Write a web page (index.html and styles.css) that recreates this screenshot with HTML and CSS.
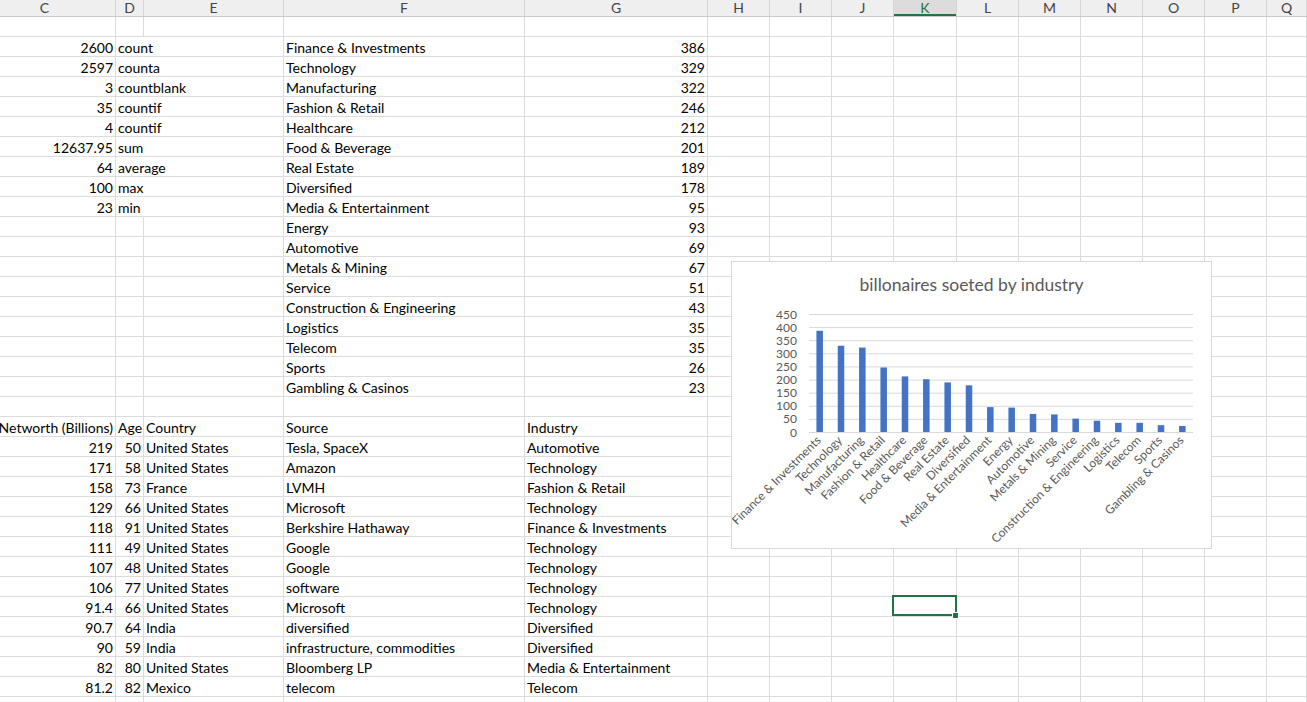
FILE: index.html
```html
<!DOCTYPE html>
<html>
<head>
<meta charset="utf-8">
<link rel="stylesheet" href="styles.css">
</head>
<body>
<div class="sheet">
  <div class="hdr">
    <span class="hc">C</span><span>D</span><span>E</span><span>F</span><span>G</span><span>H</span><span>I</span><span>J</span><span class="hk">K</span><span>L</span><span>M</span><span>N</span><span>O</span><span>P</span><span>Q</span>
  </div>
  <div class="row"><span></span><span></span><span></span><span></span><span></span><span></span><span></span><span></span><span></span><span></span><span></span><span></span><span></span><span></span><span></span></div>
  <div class="row"><span class="n">2600</span><span class="ov">count</span><span></span><span>Finance &amp; Investments</span><span class="n">386</span><span></span><span></span><span></span><span></span><span></span><span></span><span></span><span></span><span></span><span></span></div>
  <div class="row"><span class="n">2597</span><span class="ov">counta</span><span></span><span>Technology</span><span class="n">329</span><span></span><span></span><span></span><span></span><span></span><span></span><span></span><span></span><span></span><span></span></div>
  <div class="row"><span class="n">3</span><span class="ov">countblank</span><span></span><span>Manufacturing</span><span class="n">322</span><span></span><span></span><span></span><span></span><span></span><span></span><span></span><span></span><span></span><span></span></div>
  <div class="row"><span class="n">35</span><span class="ov">countif</span><span></span><span>Fashion &amp; Retail</span><span class="n">246</span><span></span><span></span><span></span><span></span><span></span><span></span><span></span><span></span><span></span><span></span></div>
  <div class="row"><span class="n">4</span><span class="ov">countif</span><span></span><span>Healthcare</span><span class="n">212</span><span></span><span></span><span></span><span></span><span></span><span></span><span></span><span></span><span></span><span></span></div>
  <div class="row"><span class="n">12637.95</span><span class="ov">sum</span><span></span><span>Food &amp; Beverage</span><span class="n">201</span><span></span><span></span><span></span><span></span><span></span><span></span><span></span><span></span><span></span><span></span></div>
  <div class="row"><span class="n">64</span><span class="ov">average</span><span></span><span>Real Estate</span><span class="n">189</span><span></span><span></span><span></span><span></span><span></span><span></span><span></span><span></span><span></span><span></span></div>
  <div class="row"><span class="n">100</span><span class="ov">max</span><span></span><span>Diversified</span><span class="n">178</span><span></span><span></span><span></span><span></span><span></span><span></span><span></span><span></span><span></span><span></span></div>
  <div class="row"><span class="n">23</span><span class="ov">min</span><span></span><span>Media &amp; Entertainment</span><span class="n">95</span><span></span><span></span><span></span><span></span><span></span><span></span><span></span><span></span><span></span><span></span></div>
  <div class="row"><span></span><span></span><span></span><span>Energy</span><span class="n">93</span><span></span><span></span><span></span><span></span><span></span><span></span><span></span><span></span><span></span><span></span></div>
  <div class="row"><span></span><span></span><span></span><span>Automotive</span><span class="n">69</span><span></span><span></span><span></span><span></span><span></span><span></span><span></span><span></span><span></span><span></span></div>
  <div class="row"><span></span><span></span><span></span><span>Metals &amp; Mining</span><span class="n">67</span><span></span><span></span><span></span><span></span><span></span><span></span><span></span><span></span><span></span><span></span></div>
  <div class="row"><span></span><span></span><span></span><span>Service</span><span class="n">51</span><span></span><span></span><span></span><span></span><span></span><span></span><span></span><span></span><span></span><span></span></div>
  <div class="row"><span></span><span></span><span></span><span>Construction &amp; Engineering</span><span class="n">43</span><span></span><span></span><span></span><span></span><span></span><span></span><span></span><span></span><span></span><span></span></div>
  <div class="row"><span></span><span></span><span></span><span>Logistics</span><span class="n">35</span><span></span><span></span><span></span><span></span><span></span><span></span><span></span><span></span><span></span><span></span></div>
  <div class="row"><span></span><span></span><span></span><span>Telecom</span><span class="n">35</span><span></span><span></span><span></span><span></span><span></span><span></span><span></span><span></span><span></span><span></span></div>
  <div class="row"><span></span><span></span><span></span><span>Sports</span><span class="n">26</span><span></span><span></span><span></span><span></span><span></span><span></span><span></span><span></span><span></span><span></span></div>
  <div class="row"><span></span><span></span><span></span><span>Gambling &amp; Casinos</span><span class="n">23</span><span></span><span></span><span></span><span></span><span></span><span></span><span></span><span></span><span></span><span></span></div>
  <div class="row"><span></span><span></span><span></span><span></span><span></span><span></span><span></span><span></span><span></span><span></span><span></span><span></span><span></span><span></span><span></span></div>
  <div class="row"><span class="clip">Networth (Billions)</span><span>Age</span><span>Country</span><span>Source</span><span>Industry</span><span></span><span></span><span></span><span></span><span></span><span></span><span></span><span></span><span></span><span></span></div>
  <div class="row"><span class="n">219</span><span class="n">50</span><span>United States</span><span>Tesla, SpaceX</span><span>Automotive</span><span></span><span></span><span></span><span></span><span></span><span></span><span></span><span></span><span></span><span></span></div>
  <div class="row"><span class="n">171</span><span class="n">58</span><span>United States</span><span>Amazon</span><span>Technology</span><span></span><span></span><span></span><span></span><span></span><span></span><span></span><span></span><span></span><span></span></div>
  <div class="row"><span class="n">158</span><span class="n">73</span><span>France</span><span>LVMH</span><span>Fashion &amp; Retail</span><span></span><span></span><span></span><span></span><span></span><span></span><span></span><span></span><span></span><span></span></div>
  <div class="row"><span class="n">129</span><span class="n">66</span><span>United States</span><span>Microsoft</span><span>Technology</span><span></span><span></span><span></span><span></span><span></span><span></span><span></span><span></span><span></span><span></span></div>
  <div class="row"><span class="n">118</span><span class="n">91</span><span>United States</span><span>Berkshire Hathaway</span><span>Finance &amp; Investments</span><span></span><span></span><span></span><span></span><span></span><span></span><span></span><span></span><span></span><span></span></div>
  <div class="row"><span class="n">111</span><span class="n">49</span><span>United States</span><span>Google</span><span>Technology</span><span></span><span></span><span></span><span></span><span></span><span></span><span></span><span></span><span></span><span></span></div>
  <div class="row"><span class="n">107</span><span class="n">48</span><span>United States</span><span>Google</span><span>Technology</span><span></span><span></span><span></span><span></span><span></span><span></span><span></span><span></span><span></span><span></span></div>
  <div class="row"><span class="n">106</span><span class="n">77</span><span>United States</span><span>software</span><span>Technology</span><span></span><span></span><span></span><span></span><span></span><span></span><span></span><span></span><span></span><span></span></div>
  <div class="row"><span class="n">91.4</span><span class="n">66</span><span>United States</span><span>Microsoft</span><span>Technology</span><span></span><span></span><span></span><span class="sel"></span><span></span><span></span><span></span><span></span><span></span><span></span></div>
  <div class="row"><span class="n">90.7</span><span class="n">64</span><span>India</span><span>diversified</span><span>Diversified</span><span></span><span></span><span></span><span></span><span></span><span></span><span></span><span></span><span></span><span></span></div>
  <div class="row"><span class="n">90</span><span class="n">59</span><span>India</span><span>infrastructure, commodities</span><span>Diversified</span><span></span><span></span><span></span><span></span><span></span><span></span><span></span><span></span><span></span><span></span></div>
  <div class="row"><span class="n">82</span><span class="n">80</span><span>United States</span><span>Bloomberg LP</span><span>Media &amp; Entertainment</span><span></span><span></span><span></span><span></span><span></span><span></span><span></span><span></span><span></span><span></span></div>
  <div class="row"><span class="n">81.2</span><span class="n">82</span><span>Mexico</span><span>telecom</span><span>Telecom</span><span></span><span></span><span></span><span></span><span></span><span></span><span></span><span></span><span></span><span></span></div>
  <div class="row"><span class="n">74.8</span><span class="n">68</span><span>France</span><span>L'Oréal</span><span>Fashion &amp; Retail</span><span></span><span></span><span></span><span></span><span></span><span></span><span></span><span></span><span></span><span></span></div>

  <div class="chart">
    <svg width="479" height="286" viewBox="0 0 479 286">
      <text class="title" x="239.5" y="28.5" text-anchor="middle">billonaires soeted by industry</text>
      <g class="grid">
        <line x1="77" x2="461" y1="52.5" y2="52.5"/>
        <line x1="77" x2="461" y1="65.6" y2="65.6"/>
        <line x1="77" x2="461" y1="78.7" y2="78.7"/>
        <line x1="77" x2="461" y1="91.8" y2="91.8"/>
        <line x1="77" x2="461" y1="104.9" y2="104.9"/>
        <line x1="77" x2="461" y1="118.1" y2="118.1"/>
        <line x1="77" x2="461" y1="131.2" y2="131.2"/>
        <line x1="77" x2="461" y1="144.3" y2="144.3"/>
        <line x1="77" x2="461" y1="157.4" y2="157.4"/>
        <line x1="77" x2="461" y1="170.5" y2="170.5"/>
      </g>
      <g class="ylab">
        <text x="65" y="56.5">450</text>
        <text x="65" y="69.6">400</text>
        <text x="65" y="82.7">350</text>
        <text x="65" y="95.8">300</text>
        <text x="65" y="108.9">250</text>
        <text x="65" y="122.1">200</text>
        <text x="65" y="135.2">150</text>
        <text x="65" y="148.3">100</text>
        <text x="65" y="161.4">50</text>
        <text x="65" y="174.5">0</text>
      </g>
      <g class="bars">
        <rect x="84.42" y="68.78" width="6.5" height="101.22"/>
        <rect x="105.75" y="83.73" width="6.5" height="86.27"/>
        <rect x="127.08" y="85.56" width="6.5" height="84.44"/>
        <rect x="148.42" y="105.49" width="6.5" height="64.51"/>
        <rect x="169.75" y="114.41" width="6.5" height="55.59"/>
        <rect x="191.08" y="117.29" width="6.5" height="52.71"/>
        <rect x="212.42" y="120.44" width="6.5" height="49.56"/>
        <rect x="233.75" y="123.32" width="6.5" height="46.68"/>
        <rect x="255.08" y="145.09" width="6.5" height="24.91"/>
        <rect x="276.42" y="145.61" width="6.5" height="24.39"/>
        <rect x="297.75" y="151.91" width="6.5" height="18.09"/>
        <rect x="319.08" y="152.43" width="6.5" height="17.57"/>
        <rect x="340.42" y="156.63" width="6.5" height="13.37"/>
        <rect x="361.75" y="158.72" width="6.5" height="11.28"/>
        <rect x="383.08" y="160.82" width="6.5" height="9.18"/>
        <rect x="404.42" y="160.82" width="6.5" height="9.18"/>
        <rect x="425.75" y="163.18" width="6.5" height="6.82"/>
        <rect x="447.08" y="163.97" width="6.5" height="6.03"/>
      </g>
      <g class="xlab">
        <text x="89.67" y="179" transform="rotate(-45 89.67 179)">Finance &amp; Investments</text>
        <text x="111" y="179" transform="rotate(-45 111 179)">Technology</text>
        <text x="132.33" y="179" transform="rotate(-45 132.33 179)">Manufacturing</text>
        <text x="153.67" y="179" transform="rotate(-45 153.67 179)">Fashion &amp; Retail</text>
        <text x="175" y="179" transform="rotate(-45 175 179)">Healthcare</text>
        <text x="196.33" y="179" transform="rotate(-45 196.33 179)">Food &amp; Beverage</text>
        <text x="217.67" y="179" transform="rotate(-45 217.67 179)">Real Estate</text>
        <text x="239" y="179" transform="rotate(-45 239 179)">Diversified</text>
        <text x="260.33" y="179" transform="rotate(-45 260.33 179)">Media &amp; Entertainment</text>
        <text x="281.67" y="179" transform="rotate(-45 281.67 179)">Energy</text>
        <text x="303" y="179" transform="rotate(-45 303 179)">Automotive</text>
        <text x="324.33" y="179" transform="rotate(-45 324.33 179)">Metals &amp; Mining</text>
        <text x="345.67" y="179" transform="rotate(-45 345.67 179)">Service</text>
        <text x="367" y="179" transform="rotate(-45 367 179)">Construction &amp; Engineering</text>
        <text x="388.33" y="179" transform="rotate(-45 388.33 179)">Logistics</text>
        <text x="409.67" y="179" transform="rotate(-45 409.67 179)">Telecom</text>
        <text x="431" y="179" transform="rotate(-45 431 179)">Sports</text>
        <text x="452.33" y="179" transform="rotate(-45 452.33 179)">Gambling &amp; Casinos</text>
      </g>
    </svg>
  </div>
</div>
</body>
</html>
```

FILE: styles.css
```css
html, body {
  margin: 0;
  padding: 0;
  background: #ffffff;
}

body {
  width: 1307px;
  height: 702px;
  overflow: hidden;
  font-family: "Lato", "Liberation Sans", sans-serif;
  font-size: 14px;
  color: #000000;
}

.sheet {
  position: relative;
  width: 1307px;
}

.hdr,
.row {
  display: grid;
  grid-template-columns: 116px 28px 140px 241px 183px 62px 62px 62px 63px 62px 62px 62px 62px 62px 1fr;
}

.hdr {
  height: 17px;
  background: #efefef;
  border-bottom: 1px solid #c9c9c9;
  box-sizing: border-box;
}

.hdr > span {
  border-right: 1px solid #d5d5d5;
  text-align: center;
  font-size: 14px;
  line-height: 16px;
  color: #444444;
}

.hdr > .hc {
  padding-right: 26px;
}

.hdr > .hk {
  background: #dcdcdc;
  color: #217346;
  box-shadow: inset 0 -2px 0 #217346;
}

.row > span {
  height: 20px;
  box-sizing: border-box;
  border-right: 1px solid #dcdcdc;
  border-bottom: 1px solid #dcdcdc;
  padding: 0 2px;
  line-height: 21px;
  white-space: nowrap;
  overflow: hidden;
}

.row > .n {
  text-align: right;
  padding-right: 2px;
}

.row > .ov {
  overflow: visible;
  border-right-color: transparent;
}

.row > .clip {
  display: flex;
  justify-content: flex-end;
}

.row > .sel {
  position: relative;
  overflow: visible;
}

.row > .sel::before {
  content: "";
  position: absolute;
  left: -2px;
  top: -2px;
  right: -1px;
  bottom: 0;
  border: 2px solid #217346;
}

.row > .sel::after {
  content: "";
  position: absolute;
  left: 58px;
  top: 15px;
  width: 5px;
  height: 5px;
  background: #217346;
  border: 1px solid #ffffff;
}

.chart {
  position: absolute;
  left: 731px;
  top: 261px;
  width: 481px;
  height: 288px;
  box-sizing: border-box;
  border: 1px solid #d9d9d9;
  background: #ffffff;
}

.chart svg {
  display: block;
  font-family: "Lato", "Liberation Sans", sans-serif;
}

.chart .title {
  font-size: 17.5px;
  fill: #595959;
}

.chart .grid line {
  stroke: #d9d9d9;
  stroke-width: 1;
}

.chart .ylab text {
  font-size: 12px;
  fill: #595959;
  text-anchor: end;
}

.chart .bars rect {
  fill: #4472c4;
}

.chart .xlab text {
  font-size: 12px;
  fill: #595959;
  text-anchor: end;
}
```
